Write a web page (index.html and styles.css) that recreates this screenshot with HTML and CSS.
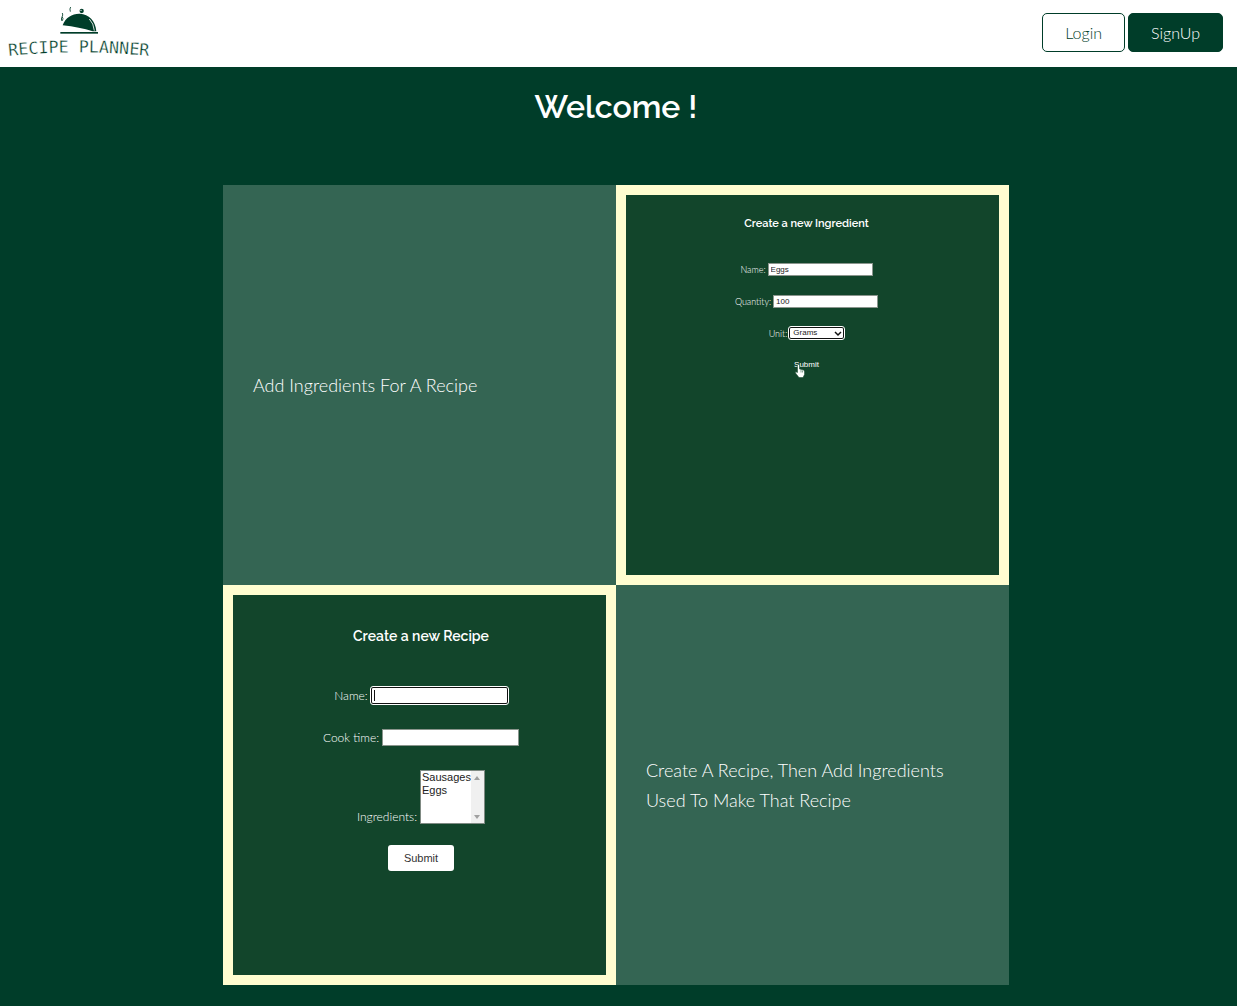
FILE: index.html
```html
<!DOCTYPE html>
<html lang="en">
<head>
<meta charset="utf-8">
<meta name="viewport" content="width=device-width, initial-scale=1">
<title>Recipe Planner</title>
<link rel="stylesheet" href="styles.css">
</head>
<body>
<header class="header">
  <a class="logo" href="#" aria-label="Recipe Planner">
    <svg viewBox="0 0 450 180" width="150" height="60">
      <g fill="#003d29">
        <path d="M188 76C196 52 218 40 240 41C266 42 287 62 289 94L278 94C252 86 222 80 188 76Z"/>
        <circle cx="245" cy="33" r="6.500"/>
        <rect x="181" y="96" width="113" height="5"/>
      </g>
      <path d="M268 57Q281 70 283 92" fill="none" stroke="#fff" stroke-width="2.500"/>
      <circle cx="243" cy="31" r="2" fill="#fff"/>
      <g fill="none" stroke="#003d29" stroke-width="2.500">
        <path d="M187 39Q190 45 186 51Q182 57 186 63M187 51Q191 56 187 62"/>
        <path d="M212 21Q208 26 211 35"/>
      </g>
      <path id="arc" d="M26 168Q238 146 456 169" fill="none"/>
      <text class="logo-text"><textPath href="#arc">RECIPE PLANNER</textPath></text>
    </svg>
  </a>
  <nav class="actions">
    <button class="btn" type="button">Login</button>
    <button class="btn btn-solid" type="button">SignUp</button>
  </nav>
</header>
<main class="main">
  <h1 class="welcome">Welcome !</h1>
  <div class="grid">
    <p class="caption">Add Ingredients For A Recipe</p>
    <form class="panel panel-ingredient">
      <h2 class="title">Create a new Ingredient</h2>
      <div class="row"><label for="ing-name">Name:</label><input class="field" id="ing-name" type="text" value="Eggs"></div>
      <div class="row"><label for="ing-qty">Quantity:</label><input class="field" id="ing-qty" type="text" value="100"></div>
      <div class="row"><label for="ing-unit">Unit:</label>
        <span class="unit"><select class="unit-select" id="ing-unit"><option>Grams</option></select>
        <svg class="chevron" viewBox="0 0 8 6" width="8" height="6" aria-hidden="true"><path d="M1 1L4 4L7 1" fill="none" stroke="#111" stroke-width="1.500"/></svg></span>
      </div>
      <div class="row">
        <button class="text-submit" type="button">Submit
          <svg class="pointer" viewBox="0 0 20 28" width="10" height="14" aria-hidden="true"><path d="M5 2Q7 0 9 2V10L17 12Q19 13 19 16V21L16 27H8L1 18Q0 14 5 17Z" fill="#fff" stroke="#12452b"/><path d="M12 12V17M15 13V17" stroke="#12452b"/></svg>
        </button>
      </div>
    </form>
    <form class="panel panel-recipe">
      <h2 class="title">Create a new Recipe</h2>
      <div class="row"><label for="rec-name">Name:</label><span class="focused"><input class="field" id="rec-name" type="text"><i class="caret"></i></span></div>
      <div class="row"><label for="rec-time">Cook time:</label><input class="field" id="rec-time" type="text"></div>
      <div class="row row-list"><label for="rec-ing">Ingredients:</label>
        <div class="listbox">
          <select class="list" id="rec-ing" multiple size="4"><option>Sausages</option><option>Eggs</option></select>
          <svg class="scroll" viewBox="0 0 13 52" width="13" height="52" aria-hidden="true"><path d="M3 9L6 5L9 9ZM3 44L6 48L9 44Z" fill="#a0a0a0"/></svg>
        </div>
      </div>
      <button class="submit" type="button">Submit</button>
    </form>
    <p class="caption">Create A Recipe, Then Add Ingredients Used To Make That Recipe</p>
  </div>
</main>
</body>
</html>
```

FILE: styles.css
```css
* { box-sizing: border-box; }
body {
  margin: 0;
  min-height: 100vh;
  background: #003d29;
  color: #fff;
  font-family: Lato, "Open Sans", sans-serif;
  font-weight: 300;
}
.header {
  display: flex;
  justify-content: space-between;
  align-items: center;
  padding: 0 14px 0 0;
  height: 67px;
  background: #fff;
}
.logo { display: block; height: 67px; }
.logo svg { display: block; overflow: visible; }
.logo-text {
  font-family: "DejaVu Sans Mono", monospace;
  font-size: 50px;
  fill: #003d29;
  stroke: #fff;
  stroke-width: 1px;
}
.actions { display: flex; gap: 3px; padding-bottom: 2px; }
.btn {
  height: 39px;
  padding: 0 22px;
  border: 1px solid #003d29;
  border-radius: 5px;
  background: #fff;
  color: #003d29;
  font: 300 16px/24px Lato, sans-serif;
}
.btn-solid { background: #003d29; color: #fff; }
.main { padding: 18px 5px 21px 0; }
.welcome {
  margin: 0 0 56px;
  text-align: center;
  font: 600 32px/44px Raleway, Lato, sans-serif;
}
.grid {
  display: grid;
  grid-template-columns: 1fr 1fr;
  grid-auto-rows: minmax(400px, auto);
  max-width: 786px;
  margin: 0 auto;
}
.caption {
  display: flex;
  align-items: center;
  margin: 0;
  padding: 0 30px;
  background: #346553;
  font-size: 18px;
  line-height: 30px;
}
.panel {
  display: flex;
  flex-direction: column;
  align-items: center;
  border: 10px solid #fffdd0;
  background: #12452b;
}
.title { margin: 0; font-family: Raleway, Lato, sans-serif; font-weight: 600; }
.row { display: flex; align-items: center; }
.field {
  border: 1px solid #8a958d;
  border-radius: 0;
  padding: 0 2px;
  background: #fff;
  color: #222;
  font-family: "Liberation Sans", sans-serif;
  outline: 0;
}
.panel-ingredient { padding: 21px 12px 0 0; }
.panel-ingredient .title { margin-bottom: 21px; font-size: 11px; line-height: 16px; }
.panel-ingredient .row { height: 32px; gap: 2px; font-size: 9px; }
.panel-ingredient .field { width: 105px; height: 13px; font-size: 8px; }
.unit { position: relative; display: flex; }
.unit-select {
  appearance: none;
  width: 55px;
  height: 12px;
  padding: 0 3px;
  border: 1px solid #111;
  border-radius: 2px;
  outline: 1px solid #fff;
  background: #fff;
  color: #222;
  font: 8px/10px "Liberation Sans", sans-serif;
}
.chevron { position: absolute; right: 2px; top: 4px; }
.text-submit {
  position: relative;
  padding: 0;
  border: 0;
  background: none;
  color: #fff;
  font: 8px/12px "Liberation Sans", sans-serif;
}
.pointer { position: absolute; left: 1px; top: 5px; }
.panel-recipe { padding: 31px 0 0 3px; }
.panel-recipe .title { margin-bottom: 28px; font-size: 14px; line-height: 20px; }
.panel-recipe .row { height: 42px; gap: 3px; font-size: 12px; }
.panel-recipe .field { width: 137px; height: 17px; font-size: 11px; }
.focused { position: relative; display: flex; }
.focused .field { border-color: #111; border-radius: 2px; outline: 1px solid #fff; }
.caret { position: absolute; left: 3px; top: 3px; width: 1px; height: 11px; background: #111; }
.panel-recipe .row-list { align-items: flex-end; height: auto; margin: 12px 0 21px; line-height: 14px; }
.listbox { display: flex; border: 1px solid #7f8a83; background: #fff; }
.list {
  width: 50px;
  height: 52px;
  padding: 0;
  border: 0;
  overflow: hidden;
  background: #fff;
  color: #222;
  font: 11px/13px "Liberation Sans", sans-serif;
}
.list option { padding: 0 0 0 1px; min-height: 13px; }
.scroll { background: #f0f0f0; }
.submit {
  width: 66px;
  height: 26px;
  padding: 0;
  border: 0;
  border-radius: 3px;
  background: #fff;
  color: #333;
  font: 11px/16px "Liberation Sans", sans-serif;
}
```
